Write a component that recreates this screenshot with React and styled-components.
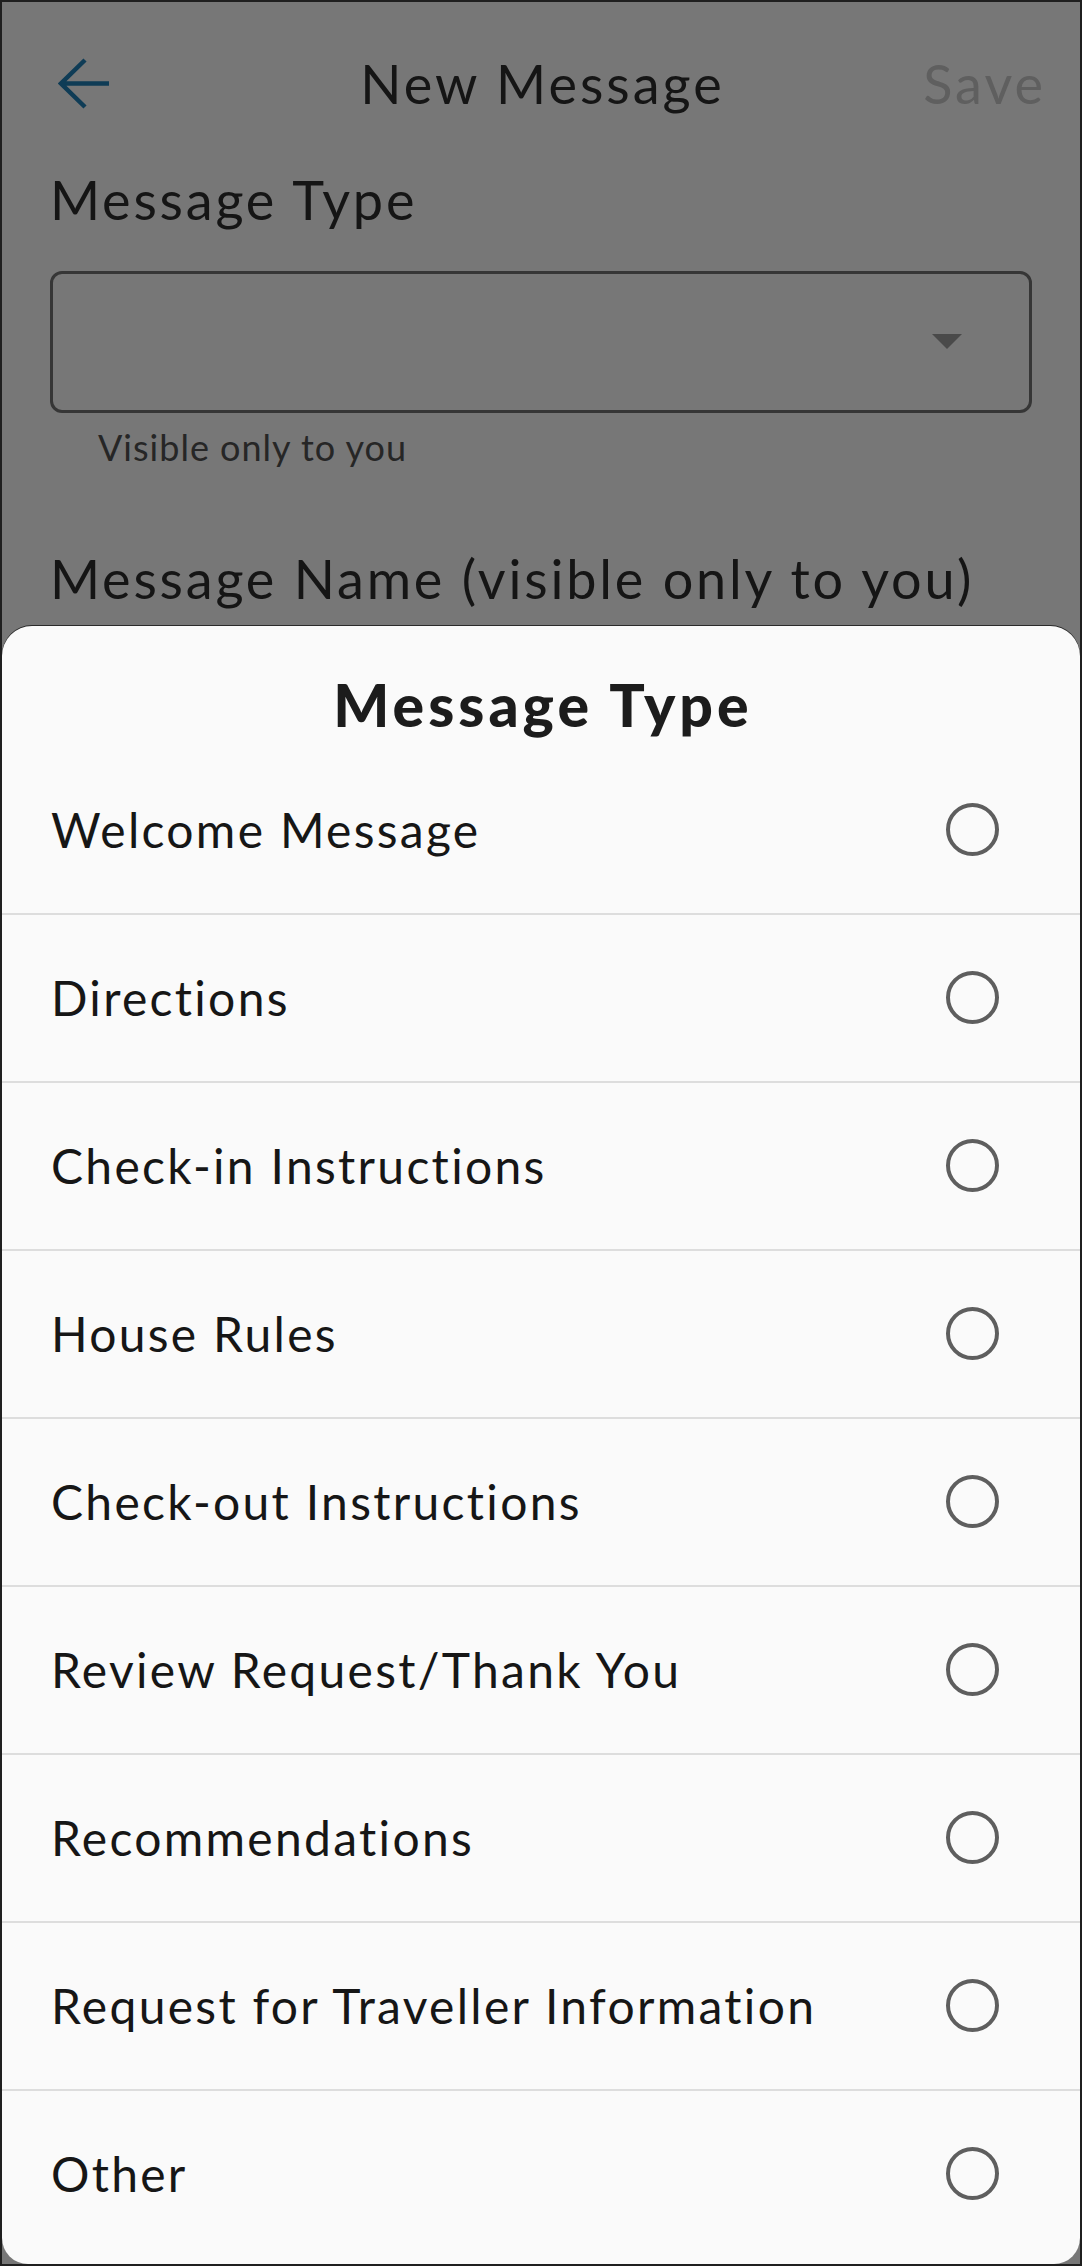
import React from "react";
import styled, { createGlobalStyle } from "styled-components";

const Global = createGlobalStyle`
  html, body { margin: 0; padding: 0; }
  body { font-family: Lato, "Noto Sans", sans-serif; background: #777777; }
  * { box-sizing: border-box; }
`;

const Screen = styled.div`
  position: relative;
  width: 1082px;
  height: 2266px;
  overflow: hidden;
  background: #777777;
  border: 2px solid #1f1f1f;
  color: #151515;
`;

const TopBar = styled.header`
  display: grid;
  grid-template-columns: 1fr auto 1fr;
  align-items: center;
  height: 164px;
  padding: 0 37px;
`;

const BackButton = styled.button`
  justify-self: start;
  display: flex;
  width: 52px;
  height: 52px;
  margin-left: 19px;
  padding: 0;
  border: 0;
  background: none;
  color: #0f3c56;
`;

const BarTitle = styled.h1`
  margin: 0 -3px 0 0;
  font-size: 54px;
  font-weight: 400;
  line-height: 1.2;
  letter-spacing: 3px;
  color: #151515;
`;

const SaveAction = styled.span`
  justify-self: end;
  margin-right: -3px;
  font-size: 54px;
  line-height: 1.2;
  letter-spacing: 3px;
  color: #5f5f5f;
`;

const Form = styled.div`
  display: flex;
  flex-direction: column;
  padding: 0 48px;
`;

const FieldLabel = styled.div`
  font-size: 54px;
  line-height: 1.2;
  letter-spacing: 2.8px;
  margin-top: ${(p) => p.$top || 0}px;
`;

const SelectBox = styled.div`
  display: flex;
  align-items: center;
  justify-content: flex-end;
  height: 142px;
  margin-top: 38px;
  padding-right: 67px;
  border: 3px solid #363636;
  border-radius: 12px;
`;

const Caret = styled.span`
  width: 0;
  height: 0;
  border-left: 15px solid transparent;
  border-right: 15px solid transparent;
  border-top: 15px solid #4a4a4a;
`;

const Helper = styled.div`
  margin-top: 13px;
  padding-left: 48px;
  font-size: 36px;
  line-height: 1.2;
  letter-spacing: 1px;
  color: #262626;
`;

const Sheet = styled.section`
  position: absolute;
  left: 0;
  right: 0;
  top: 624px;
  bottom: 0;
  display: flex;
  flex-direction: column;
  background: #fafafa;
  border-radius: 30px 30px 26px 26px;
  box-shadow: 0 -1px 0 #2a2a2a;
`;

const SheetTitle = styled.h2`
  margin: 0;
  padding: 44px 0 6px 4px;
  text-align: center;
  font-size: 59px;
  font-weight: 900;
  line-height: 1.2;
  letter-spacing: 4px;
  color: #1c1c1c;
`;

const OptionList = styled.ul`
  list-style: none;
  margin: 0;
  padding: 0;
`;

const Option = styled.li`
  display: flex;
  align-items: center;
  justify-content: space-between;
  height: ${(p) => (p.$last ? 166 : 168)}px;
  padding: 0 81px 0 49px;
  border-bottom: ${(p) => (p.$last ? "none" : "2px solid #dddddd")};
  font-size: 48px;
  line-height: 1.2;
  letter-spacing: 2.3px;
  color: #161616;
`;

const Radio = styled.span`
  flex: none;
  width: 53px;
  height: 53px;
  border-radius: 50%;
  border: 4.5px solid #5e5e5e;
  background: #fafafa;
`;

const options = [
  "Welcome Message",
  "Directions",
  "Check-in Instructions",
  "House Rules",
  "Check-out Instructions",
  "Review Request/Thank You",
  "Recommendations",
  "Request for Traveller Information",
  "Other",
];

function ArrowIcon() {
  return (
    <svg width="52" height="52" viewBox="0 0 52 52" fill="none">
      <path
        d="M27 2 L3 25.5 L27 49 M3 25.5 H51"
        stroke="currentColor"
        strokeWidth="4.5"
        strokeLinejoin="miter"
      />
    </svg>
  );
}

export default function App() {
  return (
    <Screen>
      <Global />
      <TopBar>
        <BackButton aria-label="Back">
          <ArrowIcon />
        </BackButton>
        <BarTitle>New Message</BarTitle>
        <SaveAction>Save</SaveAction>
      </TopBar>
      <Form>
        <FieldLabel $top={2}>Message Type</FieldLabel>
        <SelectBox>
          <Caret />
        </SelectBox>
        <Helper>Visible only to you</Helper>
        <FieldLabel $top={78}>Message Name (visible only to you)</FieldLabel>
      </Form>
      <Sheet>
        <SheetTitle>Message Type</SheetTitle>
        <OptionList>
          {options.map((o, i) => (
            <Option key={o} $last={i === options.length - 1}>
              <span>{o}</span>
              <Radio />
            </Option>
          ))}
        </OptionList>
      </Sheet>
    </Screen>
  );
}
